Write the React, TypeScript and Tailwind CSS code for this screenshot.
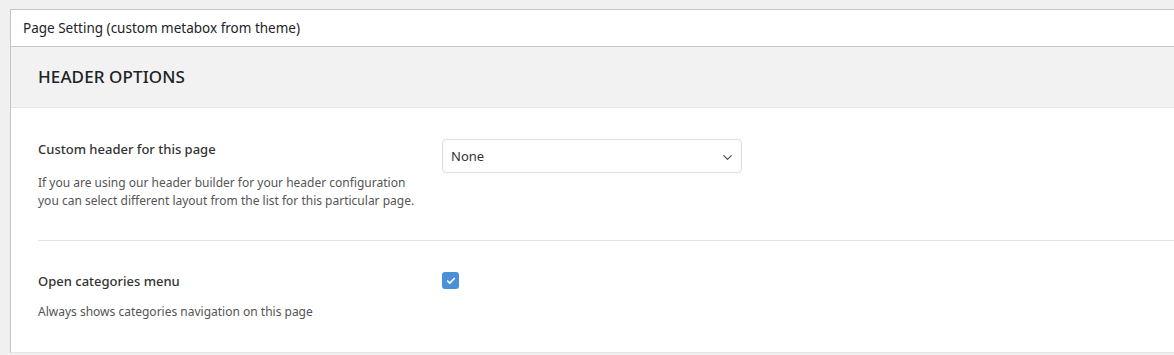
import { ChevronDown, Check } from "lucide-react";

const font = { fontFamily: '"Noto Sans", "Open Sans", sans-serif' };

const App = () => {
  return (
    <div className="min-h-screen bg-[#f0f0f1] pt-[9px] pl-[10px]" style={font}>
      <div className="border-l border-t border-b border-l-[#c3c4c7] border-t-[#c3c4c7] border-b-[#e5e5e5] bg-white">
        <div className="h-[37px] border-b border-[#c3c4c7] pl-[12px] flex items-center text-[13.5px] text-[#1d2327]">
          Page Setting (custom metabox from theme)
        </div>
        <div className="h-[61px] bg-[#f2f2f2] border-b border-[#e5e5e5] pl-[27px] flex items-center text-[17px] font-medium text-[#1d2327] tracking-[0.1px]">
          HEADER OPTIONS
        </div>
        <div className="pl-[27px]">
          <div className="flex pt-[30px] pb-[30px] border-b border-[#e5e5e5]">
            <div className="w-[404px]">
              <div className="text-[13px] font-medium text-[#333] leading-[22px]">
                Custom header for this page
              </div>
              <p className="mt-[14px] text-[12px] leading-[18px] text-[#555]">
                If you are using our header builder for your header configuration
                <br />
                you can select different layout from the list for this particular page.
              </p>
            </div>
            <div className="pt-[1px]">
              <div className="w-[300px] h-[34px] border border-[#dddddd] rounded-[4px] flex items-center justify-between pl-[8px] pr-[6px] pt-[2px] text-[13px] text-[#333]">
                <span>None</span>
                <ChevronDown size={15} strokeWidth={2} className="text-[#555]" />
              </div>
            </div>
          </div>
          <div className="flex pt-[29px] pb-[31px]">
            <div className="w-[404px]">
              <div className="text-[13px] font-medium text-[#333] leading-[22px]">
                Open categories menu
              </div>
              <p className="mt-[11px] text-[12px] leading-[18px] text-[#555]">
                Always shows categories navigation on this page
              </p>
            </div>
            <div className="pt-[2px]">
              <div className="w-[17px] h-[17px] rounded-[3px] bg-[#4a90d9] flex items-center justify-center">
                <Check size={10} strokeWidth={4} className="text-white" />
              </div>
            </div>
          </div>
        </div>
      </div>
    </div>
  );
};

export default App;
